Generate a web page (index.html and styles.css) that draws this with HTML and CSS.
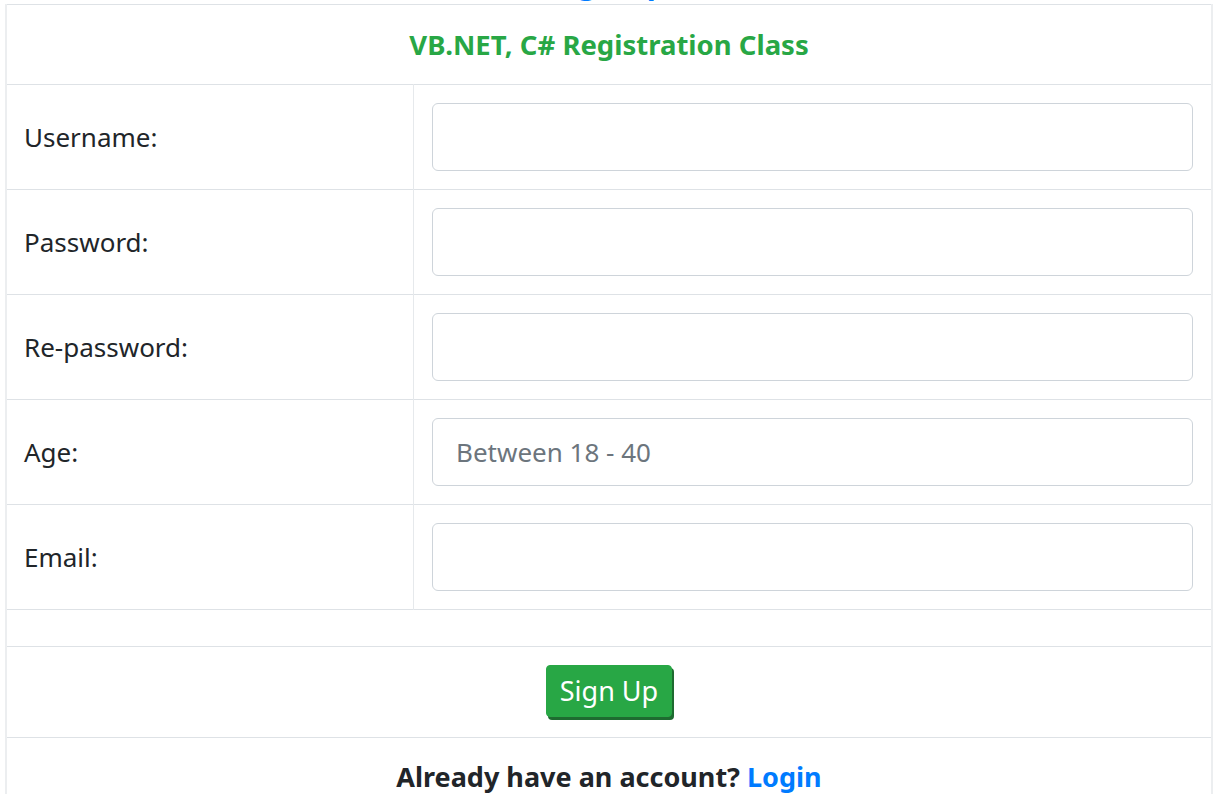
FILE: index.html
```html
<!DOCTYPE html>
<html lang="en">
<head>
<meta charset="utf-8">
<title>Registration</title>
<link rel="stylesheet" href="styles.css">
</head>
<body>
<div class="page">
  <h2 class="page-title">Sign Up</h2>
  <table class="reg-table">
    <tr>
      <th colspan="2" class="title-cell">VB.NET, C# Registration Class</th>
    </tr>
    <tr>
      <td class="label-cell">Username:</td>
      <td class="input-cell"><input class="form-input" type="text"></td>
    </tr>
    <tr>
      <td class="label-cell">Password:</td>
      <td class="input-cell"><input class="form-input" type="password"></td>
    </tr>
    <tr>
      <td class="label-cell">Re-password:</td>
      <td class="input-cell"><input class="form-input" type="password"></td>
    </tr>
    <tr>
      <td class="label-cell">Age:</td>
      <td class="input-cell"><input class="form-input" type="text" placeholder="Between 18 - 40"></td>
    </tr>
    <tr>
      <td class="label-cell">Email:</td>
      <td class="input-cell"><input class="form-input" type="email"></td>
    </tr>
    <tr>
      <td colspan="2" class="spacer-cell"></td>
    </tr>
    <tr>
      <td colspan="2" class="button-cell"><button class="btn-signup" type="button">Sign Up</button></td>
    </tr>
    <tr>
      <td colspan="2" class="login-cell">Already have an account? <a class="login-link" href="#">Login</a></td>
    </tr>
  </table>
</div>
</body>
</html>
```
FILE: styles.css
```css
html, body {
  margin: 0;
  padding: 0;
  background: #ffffff;
}
body {
  font-family: "Noto Sans", "Open Sans", sans-serif;
  color: #212529;
  overflow: hidden;
}
.page {
  padding: 0 4px 0 5px;
  margin-top: -36px;
}
.page-title {
  margin: 0;
  height: 40px;
  line-height: 37px;
  font-size: 30px;
  font-weight: 700;
  color: #007bff;
  text-align: center;
}
.reg-table {
  width: 100%;
  border-collapse: collapse;
  border-left: 2px solid #eceef0;
  border-right: 2px solid #eceef0;
}
.reg-table th,
.reg-table td {
  border-top: 1px solid #dee2e6;
  padding: 0;
}
.title-cell {
  height: 79px;
  text-align: center;
  color: #28a745;
  font-size: 27.5px;
  font-weight: 700;
}
.label-cell {
  width: 389px;
  padding: 0 0 0 17px !important;
  font-size: 26px;
  border-right: 1px solid #e6e9ec;
}
.input-cell {
  padding: 18px 18px 18px 18px !important;
}
.form-input {
  display: block;
  box-sizing: border-box;
  width: 100%;
  height: 68px;
  border: 1px solid #ced4da;
  border-radius: 6px;
  padding: 0 23px;
  font-family: inherit;
  font-size: 26px;
  color: #495057;
  background: #fff;
  outline: none;
}
.form-input::placeholder {
  color: #6c757d;
  opacity: 1;
}
.spacer-cell {
  height: 36px;
}
.button-cell {
  padding: 18px 0 20px 0 !important;
  text-align: center;
}
.btn-signup {
  display: inline-block;
  vertical-align: top;
  font-family: inherit;
  font-size: 27px;
  line-height: 36px;
  color: #ffffff;
  background: #28a745;
  border: 1px solid #28a745;
  border-radius: 4px;
  padding: 6px 13px;
  height: 52px;
  box-shadow: 2px 3px 0 #1e6b30;
  cursor: pointer;
}
.login-cell {
  padding-top: 20px !important;
  text-align: center;
  font-size: 27px;
  font-weight: 700;
  vertical-align: top;
  height: 60px;
}
.login-link {
  color: #007bff;
  text-decoration: none;
}
```
